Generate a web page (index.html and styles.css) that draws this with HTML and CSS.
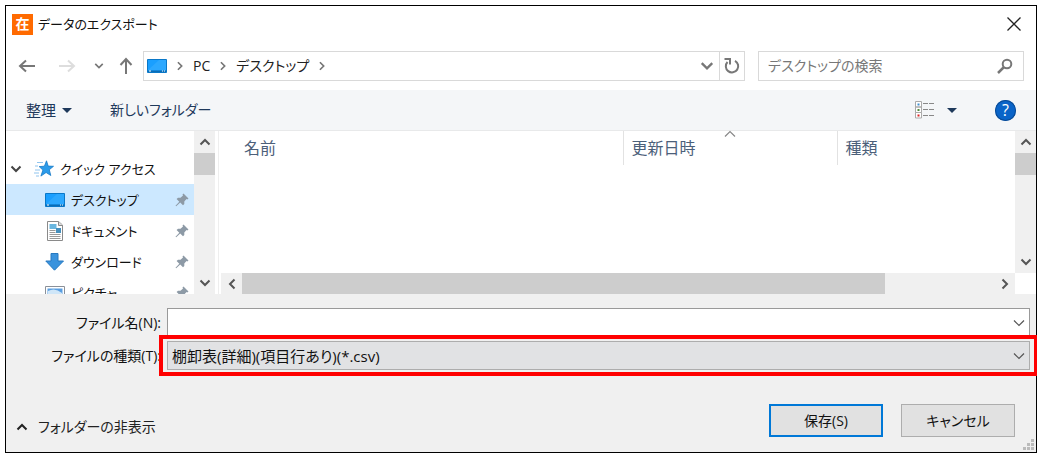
FILE: index.html
```html
<!DOCTYPE html>
<html lang="ja">
<head>
    <meta charset="UTF-8">
    <meta name="viewport" content="width=device-width, initial-scale=1.0">
    <title>データのエクスポート</title>
    <link rel="stylesheet" href="styles.css">
</head>
<body>
    <!-- shared icons -->
    <svg class="sprite" width="0" height="0">
        <symbol id="chevron" viewBox="0 0 12 12"><path d="M1.5 3.5 6 8l4.500-4.500" fill="none" stroke="currentColor" stroke-width="2"/></symbol>
        <symbol id="chevron-thin" viewBox="0 0 12 12"><path d="M1 3.500 6 8.500l5-5" fill="none" stroke="currentColor" stroke-width="1.200"/></symbol>
        <symbol id="desktop" viewBox="0 0 20 16">
            <path d="M.5 1.500h19v13H.5z" fill="#1a9fff" stroke="#0a78c8"/>
            <path d="M12 2h7v10H1z" fill="#3db2ff" opacity=".5"/>
            <path d="M1 12.500h18V14H1z" fill="#0b6cb5"/>
            <path d="M2 13h2m11 0h1m1 0h1" stroke="#fff"/>
        </symbol>
        <symbol id="pin" viewBox="0 0 14 14">
            <path d="M8.500.5 13.500 5.500 12.300 6.500 11.500 6 9.300 8.500 9.300 11 8 12.300 5.200 9.600 1.200 13.300.5 12.700 4.300 8.700 1.600 6 3 4.700 5.500 4.800 8 2.500 7.500 1.600z" fill="#8d9aa6"/>
        </symbol>
    </svg>

    <div class="dialog">
        <header class="titlebar">
            <span class="app-icon">在</span>
            <h1 class="title">データのエクスポート</h1>
            <button class="close" aria-label="閉じる">
                <svg width="14" height="14" viewBox="0 0 14 14"><path d="M.5.5l13 13M13.500.5l-13 13" fill="none" stroke="#222" stroke-width="1.300"/></svg>
            </button>
        </header>

        <nav class="navbar">
            <button class="nav-button" aria-label="戻る">
                <svg width="18" height="14" viewBox="0 0 18 14"><path d="M17 7H2m6-5.500L2 7l6 5.500" fill="none" stroke="#777" stroke-width="2"/></svg>
            </button>
            <button class="nav-button forward" aria-label="進む">
                <svg width="18" height="14" viewBox="0 0 18 14"><path d="M1 7h15m-6-5.500L16 7l-6 5.500" fill="none" stroke="#ddd" stroke-width="2"/></svg>
            </button>
            <button class="nav-button history" aria-label="履歴"><svg width="10" height="10"><use href="#chevron"/></svg></button>
            <button class="nav-button" aria-label="上へ">
                <svg width="14" height="18" viewBox="0 0 14 18"><path d="M7 17V2M1.500 8 7 2l5.500 6" fill="none" stroke="#777" stroke-width="2"/></svg>
            </button>
            <div class="address">
                <svg width="20" height="16"><use href="#desktop"/></svg>
                <svg class="point-right" width="10" height="10"><use href="#chevron"/></svg>
                <a href="#">PC</a>
                <svg class="point-right" width="10" height="10"><use href="#chevron"/></svg>
                <a href="#">デスクトップ</a>
                <svg class="point-right" width="10" height="10"><use href="#chevron"/></svg>
                <button class="address-drop" aria-label="以前の場所"><svg width="14" height="14"><use href="#chevron"/></svg></button>
                <button class="refresh" aria-label="更新">
                    <svg width="18" height="18" viewBox="0 0 18 18"><path d="M12 3.800A6.200 6.200 0 1 1 4.500 5" fill="none" stroke="#777" stroke-width="2"/><path d="M1.500 2h5.500v5.500" fill="none" stroke="#777" stroke-width="2"/></svg>
                </button>
            </div>
            <label class="search">
                <input type="search" placeholder="デスクトップの検索" aria-label="デスクトップの検索">
                <svg width="16" height="16" viewBox="0 0 16 16"><circle cx="10" cy="6" r="4.300" fill="none" stroke="#777" stroke-width="2"/><path d="M7 9l-6 6" stroke="#777" stroke-width="2.500"/></svg>
            </label>
        </nav>

        <div class="toolbar">
            <button class="tool organize">整理 <span class="arrow"></span></button>
            <button class="tool">新しいフォルダー</button>
            <button class="tool view" aria-label="表示方法の変更">
                <svg width="20" height="18" viewBox="0 0 20 18">
                    <path d="M.5.500h6v5.500h-6zM.5 6h6v5.500h-6zM.5 11.500h6V17h-6z" fill="#fff" stroke="#aaa"/>
                    <path d="M2.500 2.500h2v2h-2z" fill="#3d8fd1"/><path d="M2.500 8h2v2h-2z" fill="#4f8a3c"/><path d="M2.500 13.500h2v2h-2z" fill="#d22"/>
                    <path d="M8 2.500h5m1 0h5M8 8.500h5m1 0h5M8 14.500h5m1 0h5" stroke="#888"/>
                </svg>
                <span class="arrow"></span>
            </button>
            <button class="help" aria-label="ヘルプ">?</button>
        </div>

        <div class="browser">
            <ul class="tree">
                <li><a href="#" class="root">
                    <svg width="12" height="12"><use href="#chevron"/></svg>
                    <svg width="20" height="18" viewBox="0 0 20 18"><path d="M12.500.8l1.700 5.300 5.300.2-4.200 3.400 1.500 5.800-4.700-3-5.200 3.600 2-6-3.700-3.500 5.200-.4z" fill="#2b9bea" stroke="#167ac6" stroke-width=".8"/><path d="M3 2.500h6M1 6h3M1 10h5M0 13h5M2 16h3" stroke="#8fc4ee"/></svg>
                    <span>クイック アクセス</span>
                </a></li>
                <li><a href="#" class="selected">
                    <svg width="20" height="16"><use href="#desktop"/></svg>
                    <span>デスクトップ</span>
                    <svg class="pin" width="14" height="14"><use href="#pin"/></svg>
                </a></li>
                <li><a href="#">
                    <svg width="20" height="20" viewBox="0 0 20 20"><path d="M2.500 .5h11l4 3.500v15.500h-15z" fill="#fff" stroke="#8a8a8a"/><path d="M13.500 .5v4h4" fill="#ddd" stroke="#8a8a8a"/><path d="M4.500 3h7v5h-7z" fill="#69b6df"/><path d="M11 7h5v5h-5z" fill="#458fbc"/><path d="M4.500 9.500h6m-6 2h6m-6 2h11m-11 2h11m-11 2h11" stroke="#999"/></svg>
                    <span>ドキュメント</span>
                    <svg class="pin" width="14" height="14"><use href="#pin"/></svg>
                </a></li>
                <li><a href="#">
                    <svg width="20" height="18" viewBox="0 0 20 18"><path d="M6 .5h7V8h5.500L9.500 17.200.8 8H6z" fill="#3a93dd" stroke="#2779c0"/></svg>
                    <span>ダウンロード</span>
                    <svg class="pin" width="14" height="14"><use href="#pin"/></svg>
                </a></li>
                <li><a href="#">
                    <svg width="20" height="16" viewBox="0 0 20 16"><path d="M.5 1.500h19v13H.5z" fill="#fff" stroke="#8a9099"/><path d="M2.500 3.500h15v9h-15z" fill="#5a9ee0"/><path d="M3 6q7-4 14 2v4H3z" fill="#cfe6f8"/></svg>
                    <span>ピクチャ</span>
                    <svg class="pin" width="14" height="14"><use href="#pin"/></svg>
                </a></li>
            </ul>
            <div class="scrollbar vertical">
                <button aria-label="上へスクロール"><svg class="point-up" width="12" height="12"><use href="#chevron"/></svg></button>
                <div class="thumb"></div>
                <button class="end" aria-label="下へスクロール"><svg width="12" height="12"><use href="#chevron"/></svg></button>
            </div>

            <div class="files">
                <div class="list">
                    <table>
                        <thead>
                            <tr>
                                <th class="col-name">名前</th>
                                <th class="col-date">更新日時<svg class="sort point-up" width="12" height="12"><use href="#chevron-thin"/></svg></th>
                                <th class="col-type">種類</th>
                            </tr>
                        </thead>
                    </table>
                </div>
                <div class="scrollbar vertical">
                    <button aria-label="上へスクロール"><svg class="point-up" width="12" height="12"><use href="#chevron"/></svg></button>
                    <div class="thumb"></div>
                    <button class="end" aria-label="下へスクロール"><svg width="12" height="12"><use href="#chevron"/></svg></button>
                </div>
                <div class="scrollbar horizontal">
                    <button aria-label="左へスクロール"><svg class="point-left" width="12" height="12"><use href="#chevron"/></svg></button>
                    <div class="thumb"></div>
                    <button class="end" aria-label="右へスクロール"><svg class="point-right" width="12" height="12"><use href="#chevron"/></svg></button>
                </div>
            </div>
        </div>

        <form class="save-form">
            <label for="fileName">ファイル名(N):</label>
            <div class="field">
                <input type="text" id="fileName">
                <svg width="12" height="12"><use href="#chevron-thin"/></svg>
            </div>
            <label for="fileType">ファイルの種類(T):</label>
            <div class="field marked">
                <select id="fileType">
                    <option>棚卸表(詳細)(項目行あり)(*.csv)</option>
                </select>
                <svg width="12" height="12"><use href="#chevron-thin"/></svg>
            </div>
        </form>

        <footer class="actions">
            <button class="hide-folders"><svg class="point-up" width="12" height="12"><use href="#chevron"/></svg>フォルダーの非表示</button>
            <button class="action default">保存(S)</button>
            <button class="action">キャンセル</button>
            <svg class="grip" width="12" height="12" viewBox="0 0 12 12"><path d="M8 0h3v3H8zM4 4h3v3H4zM8 4h3v3H8zM0 8h3v3H0zM4 8h3v3H4zM8 8h3v3H8z" fill="#bbb"/></svg>
        </footer>
    </div>
</body>
</html>
```

FILE: styles.css
```css
* {
    box-sizing: border-box;
}

body {
    margin: 5px 5px 9px;
    background-color: #fff;
    color: #111;
    font-family: "Open Sans", "Noto Sans CJK JP", sans-serif;
    font-size: 14px;
    line-height: 20px;
    font-feature-settings: "palt";
}

button,
input,
select {
    margin: 0;
    padding: 0;
    border: none;
    background: none;
    color: inherit;
    font: inherit;
    font-feature-settings: inherit;
}

a {
    color: inherit;
    text-decoration: none;
}

svg {
    display: block;
    flex: none;
}

.sprite {
    position: absolute;
}

.point-up {
    transform: rotate(180deg);
}

.point-left {
    transform: rotate(90deg);
}

.point-right {
    transform: rotate(-90deg);
}

.dialog {
    border: 1px solid #000;
    background-color: #fff;
}

/* title bar */
.titlebar {
    display: flex;
    align-items: center;
    height: 36px;
    padding: 0 15px 0 6px;
}

.app-icon {
    width: 21px;
    height: 21px;
    background-color: #ff6a00;
    color: #fff;
    font-size: 14px;
    font-weight: bold;
    text-align: center;
}

.title {
    flex: 1;
    margin: 0 0 0 5px;
    font-size: 13px;
    font-weight: normal;
}

/* navigation */
.navbar {
    display: flex;
    align-items: center;
    height: 48px;
    padding: 0 12px 0 11px;
    color: #777;
}

.nav-button {
    display: flex;
    justify-content: center;
    width: 20px;
}

.forward {
    margin-left: 20px;
}

.history {
    margin: 0 7px 0 12px;
}

.address {
    flex: 1;
    display: flex;
    align-items: center;
    gap: 8px;
    height: 30px;
    margin-left: 7px;
    padding-left: 3px;
    border: 1px solid #d9d9d9;
}

.address a {
    color: #222;
}

.address-drop {
    margin-left: auto;
}

.refresh {
    display: flex;
    align-items: center;
    justify-content: center;
    width: 25px;
    height: 100%;
    margin-left: -3px;
    border-left: 1px solid #d9d9d9;
}

.search {
    display: flex;
    align-items: center;
    width: 266px;
    height: 30px;
    margin-left: 13px;
    padding: 0 10px 0 9px;
    border: 1px solid #d9d9d9;
}

.search input {
    flex: 1;
    min-width: 0;
    outline: none;
}

.search input::placeholder {
    color: #777;
}

/* toolbar */
.toolbar {
    display: flex;
    align-items: center;
    height: 41px;
    padding: 0 20px;
    border-bottom: 1px solid #e8e9ea;
    background-color: #f4f6f8;
    color: #1e395b;
}

.tool {
    display: flex;
    align-items: center;
    gap: 6px;
    margin-right: 38px;
}

.organize {
    font-size: 15px;
}

.arrow {
    border: 5px solid transparent;
    border-top-color: #1e395b;
    border-bottom: none;
}

.view {
    gap: 12px;
    margin-left: auto;
}

.help {
    width: 21px;
    height: 21px;
    border-radius: 50%;
    background-color: #0a64c8;
    box-shadow: 0 0 0 1px #0a4a94 inset;
    color: #fff;
    font-size: 16px;
}

/* folder tree and file list */
.browser {
    display: flex;
    height: 163px;
}

.tree {
    width: 188px;
    margin: 0;
    padding: 22px 0 0;
    overflow: hidden;
    font-size: 13px;
    list-style: none;
}

.tree a {
    display: flex;
    align-items: center;
    gap: 6px;
    height: 31px;
    padding: 0 5px 0 39px;
}

.tree .root {
    padding-left: 4px;
}

.root svg:first-child {
    margin-right: 6px;
    color: #444;
}

.tree .selected {
    background-color: #cce8ff;
}

.pin {
    margin-left: auto;
}

.scrollbar {
    display: flex;
    background-color: #f0f0f0;
    color: #555;
}

.scrollbar button {
    display: flex;
    align-items: center;
    justify-content: center;
    width: 21px;
    height: 22px;
}

.scrollbar .end {
    margin: auto 0 0 auto;
}

.vertical {
    flex-direction: column;
    width: 21px;
}

.vertical .thumb {
    height: 22px;
    background-color: #cdcdcd;
}

.horizontal .thumb {
    width: 81%;
    background-color: #cdcdcd;
}

.files {
    flex: 1;
    display: grid;
    grid-template-columns: 1fr 21px;
    grid-template-rows: 1fr 21px;
    margin-left: 3px;
    padding-left: 2px;
    border-left: 1px solid #eee;
}

.files table {
    width: 100%;
    border-collapse: collapse;
    table-layout: fixed;
}

.files th {
    position: relative;
    height: 34px;
    padding: 0 8px;
    border-left: 1px solid #e2e2e2;
    color: #4c607a;
    font-size: 16px;
    font-weight: normal;
    text-align: left;
}

.files .col-name {
    padding-left: 23px;
    border-left: none;
}

.col-date {
    width: 214px;
}

.col-type {
    width: 178px;
}

.sort {
    position: absolute;
    top: -3px;
    left: 50%;
    margin-left: -6px;
    color: #888;
}

/* file name and type */
.save-form {
    display: grid;
    grid-template-columns: 155px 1fr;
    align-items: center;
    column-gap: 6px;
    row-gap: 4px;
    padding: 14px 6px 0 0;
    background-color: #f0f0f0;
}

.save-form label {
    text-align: right;
}

.field {
    position: relative;
    display: flex;
    align-items: center;
    height: 29px;
    padding-right: 4px;
    border: 1px solid #999;
    background-color: #fff;
    color: #555;
}

.field input,
.field select {
    flex: 1;
    height: 100%;
    padding-left: 4px;
    outline: none;
    appearance: none;
    color: #111;
}

.marked {
    z-index: 1;
    border-color: #adadad;
    background-color: #e1e2e4;
}

.marked select {
    font-size: 15px;
}

.marked::after {
    content: "";
    position: absolute;
    inset: -7px -9px;
    border: 4px solid #f00;
    pointer-events: none;
}

/* bottom buttons */
.actions {
    position: relative;
    display: flex;
    align-items: flex-end;
    gap: 18px;
    padding: 34px 21px 15px 10px;
    background-color: #f0f0f0;
}

.hide-folders {
    display: flex;
    align-items: center;
    gap: 10px;
    margin-right: auto;
    color: #222;
}

.action {
    width: 114px;
    height: 33px;
    border: 1px solid #adadad;
    background-color: #e1e1e1;
}

.default {
    border: 2px solid #0078d7;
}

.grip {
    position: absolute;
    right: 1px;
    bottom: 1px;
}
```
